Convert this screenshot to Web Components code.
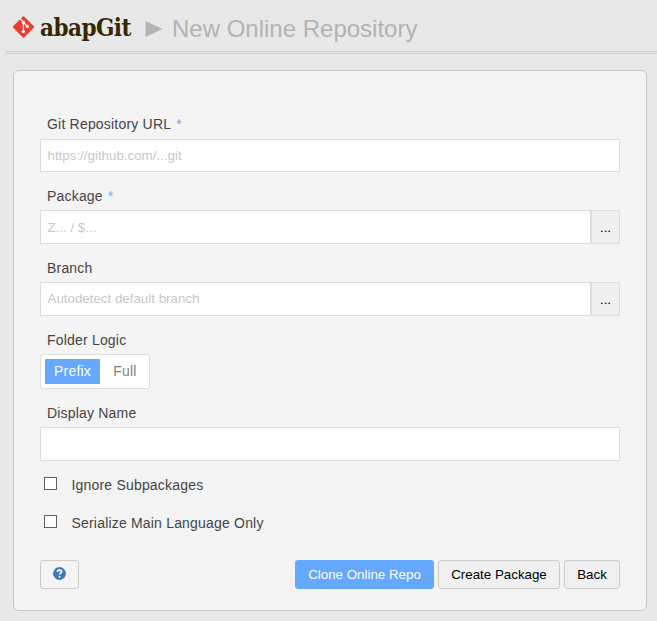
<!DOCTYPE html>
<html lang="en">
<head>
<meta charset="utf-8">
<title>abapGit</title>
<style>
html{background:#e8e8e8}
body{margin:0;font-family:"Liberation Sans",Arial,sans-serif;font-size:14px;color:#444;overflow:hidden}
</style>
</head>
<body>
<repo-page></repo-page>
<script>
const define = (name, html) => customElements.define(name, class extends HTMLElement {
  constructor() {
    super();
    const t = document.createElement('template');
    t.innerHTML = html;
    this.attachShadow({mode: 'open'}).append(t.content.cloneNode(true));
  }
});

define('git-logo', `<style>:host{display:flex;gap:5px;width:120px;height:34px}svg{display:block;flex:none}span{margin-top:-3px;font:bold 24px/30px "DejaVu Serif Condensed","DejaVu Serif",serif;font-stretch:condensed;letter-spacing:-.55px;color:#362701;white-space:nowrap}</style>
<svg width="22" height="22" viewBox="0 0 22 22">
<path d="M9.4 .9Q10.5-.2 11.6 .9L20.5 9.8Q21.6 10.9 20.5 12L11.6 20.9Q10.5 22 9.4 20.9L.5 12Q-.6 10.9 .5 9.8Z" fill="#f03c2e"/>
<path d="M7.2 2.7 10.4 5.9V15M10.7 6.6 14.1 10.1" fill="none" stroke="#fff" stroke-width="1.3"/>
<circle cx="10.4" cy="6.2" r="1.5" fill="#fff"/><circle cx="10.4" cy="15.5" r="1.6" fill="#fff"/><circle cx="14.3" cy="10.4" r="1.6" fill="#fff"/>
</svg><span>abapGit</span>`);

define('page-header', `<style>:host{display:block;margin-left:5px;height:54px;border-bottom:1px solid #ccc;box-sizing:border-box}
.in{height:51px;box-sizing:border-box;padding:16px 0 0 8px;display:flex}
.line{height:1px;background:#ccc}
.arrow{margin:5px 0 0 12px;display:block}
h1{margin:-1px 0 0 9px;font-size:24px;line-height:28px;font-weight:400;color:#b3b3b3;white-space:nowrap}</style>
<div class="in"><git-logo></git-logo><svg class="arrow" width="18" height="17"><path d="M.5 0 17.5 8 .5 16Z" fill="#b3b3b3"/></svg><h1><slot></slot></h1></div><div class="line"></div>`);

define('form-field', `<style>:host{display:block}
.label{height:18px;line-height:18px;padding:15px 0 5px 7px;white-space:nowrap;letter-spacing:.19px}
:host([first]) .label{padding:14px 0 6px 7px;letter-spacing:.2px}
.star{display:none;color:#64a8ff;margin-left:5px}:host([required]) .star{display:inline}</style>
<div class="label"><slot name="label"></slot><span class="star">*</span></div><slot></slot>`);

define('text-box', `<style>:host{display:flex;height:34px;font-size:13.333px;color:#c8c8c8}
:host([short]){height:33px}
.box{flex:1;background:#fff;border:1px solid #ddd;padding:0 0 0 6.5px;display:flex;align-items:center;line-height:31px}
:host([picker]) .box{line-height:32px}
:host([low]) .box{align-items:flex-end;line-height:31px}
.more{display:none;box-sizing:border-box;width:29px;background:#efefef;border:1px solid #ddd;color:#000;line-height:34px;text-align:center}
:host([picker]) .more{display:block}</style>
<div class="box"><slot></slot></div><div class="more">...</div>`);

define('segment-switch', `<style>:host{display:flex;box-sizing:border-box;width:110px;height:35px;background:#fff;border:1px solid #ddd;border-radius:3px;padding:4px;line-height:25px;text-align:center;letter-spacing:.19px}
.on{flex:none;width:55px;height:25px;background:#64a8ff;color:#fff;border-radius:1px}.off{flex:none;width:50px;color:#808080}</style>
<div class="on"><slot name="on"></slot></div><div class="off"><slot name="off"></slot></div>`);

define('check-row', `<style>:host{display:flex;height:18px;line-height:18px;padding-left:4px;margin-bottom:20px;letter-spacing:.19px}
i{box-sizing:border-box;width:13px;height:13px;margin:1px 14.5px 0 0;background:#fff;border:1px solid #606060}</style><i></i><slot></slot>`);

define('push-button', `<style>:host{display:flex;align-items:center;justify-content:center;box-sizing:border-box;height:29px;border:1px solid #ccc;border-radius:3px;background:#f0f0f0;color:#000;font-size:13.333px;white-space:nowrap}
:host([primary]){background:#64a8ff;border-color:#64a8ff;color:#fff}:host([plain]){background:#f4f4f4}</style><slot></slot>`);

define('help-icon', `<style>:host{display:block;margin-top:-2px}svg{display:block}</style>
<svg width="13" height="13" viewBox="0 0 13 13"><circle cx="6.5" cy="6.5" r="6.4" fill="#4078c0"/><path d="M4.4 4.9C4.5 2.5 8.6 2.5 8.6 4.8 8.6 6.1 6.6 6.1 6.6 7.6" fill="none" stroke="#fff" stroke-width="1.6"/><circle cx="6.5" cy="9.7" r="1" fill="#fff"/></svg>`);

define('repo-page', `<style>:host{display:block;height:621px}
.card{box-sizing:border-box;margin:16px 10px 0 13px;height:541px;background:#f4f4f4;border:1px solid #c6c6c6;border-radius:6px;padding:30px 26px 0}
.checks{padding-top:15px}
.actions{display:flex;gap:4px;margin-top:28px}.actions .gap{flex:1}</style>
<page-header>New Online Repository</page-header>
<div class="card">
<form-field first required><span slot="label">Git Repository URL</span><text-box short>https://github.com/...git</text-box></form-field>
<form-field required><span slot="label">Package</span><text-box picker low>Z... / $...</text-box></form-field>
<form-field><span slot="label">Branch</span><text-box picker>Autodetect default branch</text-box></form-field>
<form-field><span slot="label">Folder Logic</span><segment-switch><span slot="on">Prefix</span><span slot="off">Full</span></segment-switch></form-field>
<form-field><span slot="label">Display Name</span><text-box></text-box></form-field>
<div class="checks"><check-row>Ignore Subpackages</check-row><check-row>Serialize Main Language Only</check-row></div>
<div class="actions"><push-button plain style="width:39px"><help-icon></help-icon></push-button><span class="gap"></span>
<push-button primary style="width:139px">Clone Online Repo</push-button><push-button style="width:122px">Create Package</push-button><push-button style="width:56px">Back</push-button></div>
</div>`);
</script>
</body>
</html>
